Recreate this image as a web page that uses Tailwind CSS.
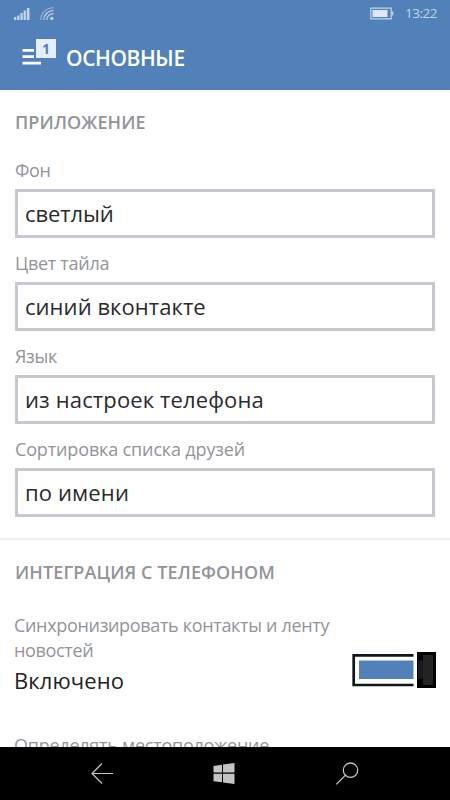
<!DOCTYPE html>
<html lang="ru">
<head>
    <meta charset="UTF-8">
    <meta name="viewport" content="width=device-width, initial-scale=1.0">
    <title>Основные</title>
    <script src="https://cdn.jsdelivr.net/npm/@tailwindcss/browser@4"></script>
</head>
<body class="bg-white font-['Open_Sans','Noto_Sans',sans-serif]">
    <div class="w-[450px] h-[800px] flex flex-col overflow-hidden">
        <header class="h-[90px] shrink-0 bg-[#5181b8] text-white">
            <!-- Status bar -->
            <div class="h-[27px] flex items-center pl-[13px] pr-[13px] text-[#c3d4e8]">
                <svg class="w-[18px] h-[14px]" viewBox="0 0 18 14" fill="currentColor">
                    <path d="M1 10h2.300v3H1zM4.200 8.500h2.300V13H4.200zM7.400 6h2.300v7H7.400zM10.600 3.500h2.300V13h-2.300zM13.800 1h2.700v12h-2.700z"/>
                </svg>
                <svg class="ml-[9px] w-[15px] h-[14px]" viewBox="0 0 15 14" fill="none" stroke="currentColor" stroke-width="1.2">
                    <path d="M.8 13A12.2 12.2 0 0 1 13.5.8" opacity=".6"/>
                    <path d="M3.800 13a9.300 9.300 0 0 1 9.700-9.300M6.700 13a6.500 6.500 0 0 1 6.800-6.400"/>
                    <circle cx="11.800" cy="11.400" r="1.700" fill="currentColor" stroke="none"/>
                </svg>
                <svg class="ml-auto w-[24px] h-[13px]" viewBox="0 0 24 13" fill="none" stroke="currentColor">
                    <path d="M.8 1.200h20.400v10.600H.8z" stroke-width="1.200"/>
                    <path d="M2.500 3h15v7h-15z" fill="#dfe8f3" stroke="none"/>
                    <path d="M22.500 4.500v4" stroke-width="1.500"/>
                </svg>
                <span class="ml-[11px] text-[13.5px] leading-none tracking-[-0.5px]">13:22</span>
            </div>
            <div class="flex pl-[22px] pt-3">
                <div class="relative w-[34px] h-[27px]">
                    <svg class="w-[20px] h-[27px]" viewBox="0 0 20 27" fill="currentColor">
                        <path d="M.5 10h11.500v2.700H.5zM.5 16.300h11.500V19H.5zM.5 22.800h18.500v2.700H.5z"/>
                    </svg>
                    <span class="absolute left-[14px] top-0 w-[20px] h-[19px] bg-[#e4effb] text-[#5181b8] text-[14px] leading-[20px] font-bold text-center">1</span>
                </div>
                <h1 class="ml-[10px] mt-1 text-[21px] leading-[30px] font-semibold tracking-[-0.4px]">ОСНОВНЫЕ</h1>
            </div>
        </header>

        <main class="h-[657px] shrink-0 overflow-hidden text-[#929499]">
            <section class="h-[450px] px-[15px] pt-[20px] border-b-2 border-[#f0f0f1]">
                <h2 class="text-[18px] leading-[25px] font-semibold tracking-[0.1px]">ПРИЛОЖЕНИЕ</h2>
                <div class="mt-[23px] flex flex-col gap-[11px]">
                    <div class="h-[82px]">
                        <label class="block h-[31px] text-[18px] leading-[25px] tracking-[-0.3px]">Фон</label>
                        <div class="h-[49px] border-3 border-[#c5c8ce] px-[7px] text-[22px] leading-[42px] tracking-[-0.1px] text-[#2b2b2b]">светлый</div>
                    </div>
                    <div class="h-[82px]">
                        <label class="block h-[31px] text-[18px] leading-[25px] tracking-[-0.3px]">Цвет тайла</label>
                        <div class="h-[49px] border-3 border-[#c5c8ce] px-[7px] text-[22px] leading-[42px] tracking-[0.05px] text-[#2b2b2b]">синий вконтакте</div>
                    </div>
                    <div class="h-[82px]">
                        <label class="block h-[31px] text-[18px] leading-[25px] tracking-[-0.3px]">Язык</label>
                        <div class="h-[49px] border-3 border-[#c5c8ce] px-[7px] text-[22px] leading-[42px] tracking-[0.13px] text-[#2b2b2b]">из настроек телефона</div>
                    </div>
                    <div class="h-[82px]">
                        <label class="block h-[31px] text-[18px] leading-[24px] tracking-[-0.15px]">Сортировка списка друзей</label>
                        <div class="h-[49px] border-3 border-[#c5c8ce] px-[7px] text-[22px] leading-[42px] tracking-[0.13px] text-[#2b2b2b]">по имени</div>
                    </div>
                </div>
            </section>

            <section class="px-[15px] pt-[20px]">
                <h2 class="text-[18px] leading-[25px] font-semibold tracking-[0.1px]">ИНТЕГРАЦИЯ С ТЕЛЕФОНОМ</h2>
                <div class="-ml-px mt-[28px] flex">
                    <div class="w-[320px] shrink-0 text-[18px] leading-[25px] tracking-[-0.33px]">
                        <p>Синхронизировать контакты и ленту<br>новостей</p>
                        <p class="mt-px text-[22px] leading-[32px] tracking-[0.1px] text-[#222]">Включено</p>
                    </div>
                    <svg class="ml-[18px] mt-[39px] w-[84px] h-[37px] shrink-0" viewBox="0 0 84 37">
                        <path d="M61.500 3.300H1.700v29.700H61.500" fill="none" stroke="#0d161c" stroke-width="2.700"/>
                        <path d="M7 8.500h54.500v18.500H7z" fill="#5181b8"/>
                        <path d="M65 0h19v36H65z" fill="#000"/>
                        <path d="M66 8.500h5v18.500h-5z" fill="#141a20"/>
                        <path d="M71 3h10v30H71z" fill="#232323"/>
                    </svg>
                </div>
                <p class="-ml-px mt-[37px] text-[18px] leading-[25px] tracking-[-0.25px]">Определять местоположение</p>
            </section>
        </main>

        <!-- Navigation keys -->
        <nav class="h-[53px] shrink-0 bg-black flex items-center justify-between px-[91px] text-[#c4c4c4]">
            <svg class="w-[22px] h-[22px]" viewBox="0 0 22 22" fill="none" stroke="currentColor" stroke-width="1.2">
                <path d="M22 10.500H1M11 .5l-10 10 10 10"/>
            </svg>
            <svg class="w-[22px] h-[22px]" viewBox="0 0 22 22" fill="currentColor">
                <path d="M.5 3 9 1.800V9.500H.5zM10 1.600 21.500 0V9.500H10zM.5 10.700H9v8.600L.5 18.200zM10 10.700h11.500V21L10 19.400z"/>
            </svg>
            <svg class="w-[24px] h-[24px]" viewBox="0 0 24 24" fill="none" stroke="currentColor" stroke-width="1.3">
                <circle cx="15.500" cy="8.200" r="7.200"/>
                <path d="M10.300 13.400 1.300 22.400"/>
            </svg>
        </nav>
    </div>
</body>
</html>
